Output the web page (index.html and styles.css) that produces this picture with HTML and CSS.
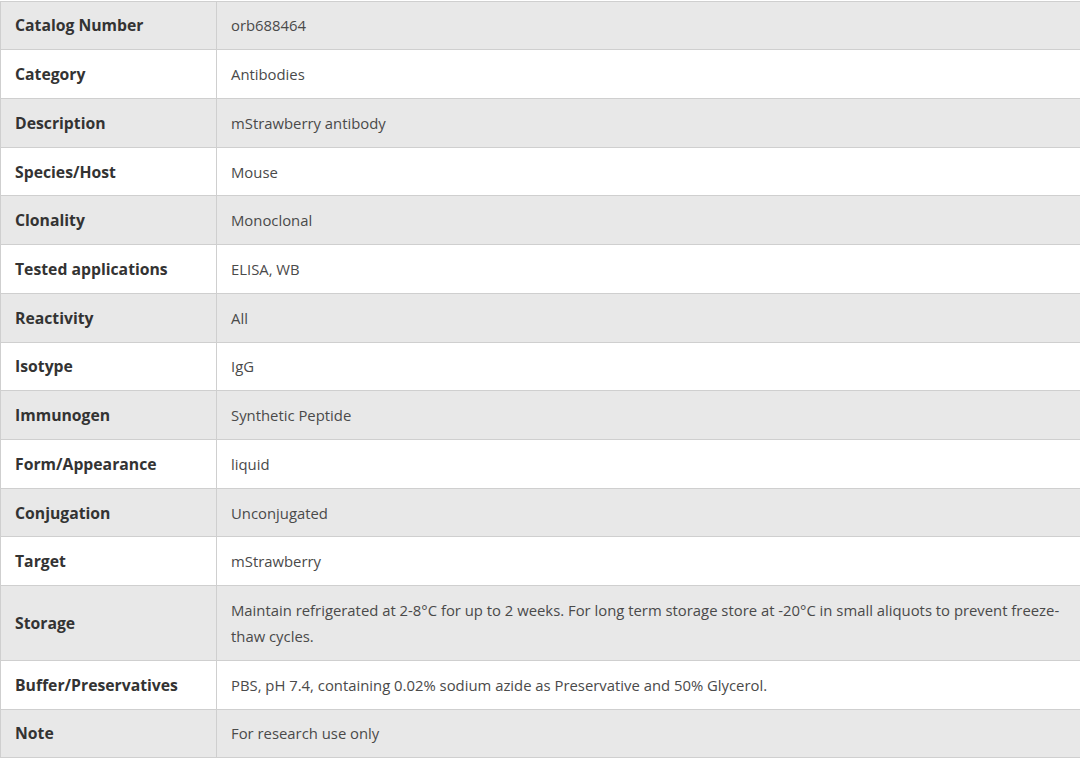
FILE: index.html
```html
<!DOCTYPE html>
<html>
<head>
<meta charset="utf-8">
<link rel="stylesheet" href="styles.css">
</head>
<body>
<div class="wrap">
<table class="spec">
<tbody>
<tr><th>Catalog Number</th><td>orb688464</td></tr>
<tr><th>Category</th><td>Antibodies</td></tr>
<tr><th>Description</th><td>mStrawberry antibody</td></tr>
<tr><th>Species/Host</th><td>Mouse</td></tr>
<tr><th>Clonality</th><td>Monoclonal</td></tr>
<tr><th>Tested applications</th><td>ELISA, WB</td></tr>
<tr><th>Reactivity</th><td>All</td></tr>
<tr><th>Isotype</th><td>IgG</td></tr>
<tr><th>Immunogen</th><td>Synthetic Peptide</td></tr>
<tr><th>Form/Appearance</th><td>liquid</td></tr>
<tr><th>Conjugation</th><td>Unconjugated</td></tr>
<tr><th>Target</th><td>mStrawberry</td></tr>
<tr><th>Storage</th><td>Maintain refrigerated at 2-8°C for up to 2 weeks. For long term storage store at -20°C in small aliquots to prevent freeze-thaw cycles.</td></tr>
<tr><th>Buffer/Preservatives</th><td>PBS, pH 7.4, containing 0.02% sodium azide as Preservative and 50% Glycerol.</td></tr>
<tr><th>Note</th><td>For research use only</td></tr>
</tbody>
</table>
</div>
</body>
</html>
```
FILE: styles.css
```css
html, body {
  margin: 0;
  padding: 0;
  background: #ffffff;
}
.wrap {
  width: 1080px;
  overflow: hidden;
  padding-top: 0.5px;
}
.spec {
  width: 1084px;
  border-collapse: collapse;
  font-family: "Open Sans", "Liberation Sans", sans-serif;
  table-layout: fixed;
}
.spec th, .spec td {
  border: 1px solid #cfcfcf;
  padding: 10.87px 14px;
  line-height: 26px;
  text-align: left;
  vertical-align: middle;
}
.spec th {
  width: 187px;
  font-weight: 700;
  font-size: 15.75px;
  color: #333333;
}
.spec td {
  font-weight: 400;
  font-size: 14.85px;
  color: #4a4a4a;
}
.spec tr:nth-child(odd) {
  background: #e8e8e8;
}
.spec tr:nth-child(even) {
  background: #ffffff;
}
```
